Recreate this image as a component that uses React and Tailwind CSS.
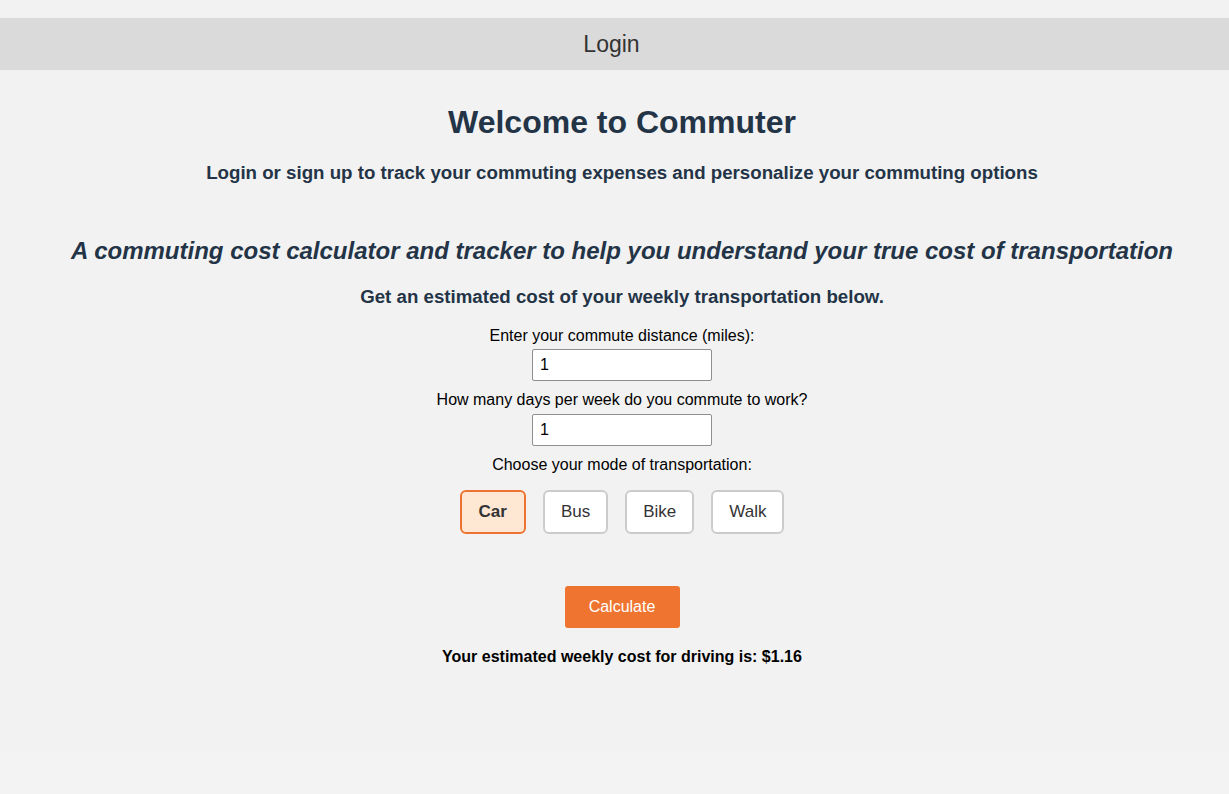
import { useState } from "react";

const modes = ["Car", "Bus", "Bike", "Walk"];

export default function App() {
  const [distance, setDistance] = useState("1");
  const [days, setDays] = useState("1");
  const [mode, setMode] = useState("Car");

  return (
    <div className="min-h-screen bg-[#f3f3f3] font-['Liberation_Sans',Arial,sans-serif]">
      <div className="h-[753px] bg-[#f2f2f2] pt-[18px]">
        <header className="flex h-[52px] items-center justify-center bg-[#dadada] pr-[6px] text-[23px] text-[#333]">
          Login
        </header>

        <main className="flex flex-col items-center pl-[15px] text-center">
          <h1 className="mt-[33px] text-[32px] font-bold leading-[38px] text-[#243447]">
            Welcome to Commuter
          </h1>
          <h3 className="mt-[21px] text-[18.7px] font-bold leading-[22px] text-[#243447]">
            Login or sign up to track your commuting expenses and personalize your commuting options
          </h3>

          <h2 className="mt-[53px] text-[24px] font-bold italic leading-[28px] text-[#243447]">
            A commuting cost calculator and tracker to help you understand your true cost of transportation
          </h2>
          <h3 className="mt-[21px] text-[18.7px] font-bold leading-[22px] text-[#243447]">
            Get an estimated cost of your weekly transportation below.
          </h3>

          <label className="mt-[19px] text-[16px] leading-[18px] text-black">
            Enter your commute distance (miles):
          </label>
          <input
            value={distance}
            onChange={(e) => setDistance(e.target.value)}
            className="mt-[4px] h-[32px] w-[180px] rounded-[2px] border border-[#8f8f8f] bg-white px-[7px] text-[16px] text-black outline-none"
          />
          <label className="mt-[10px] text-[16px] leading-[18px] text-black">
            How many days per week do you commute to work?
          </label>
          <input
            value={days}
            onChange={(e) => setDays(e.target.value)}
            className="mt-[5px] h-[32px] w-[180px] rounded-[2px] border border-[#8f8f8f] bg-white px-[7px] text-[16px] text-black outline-none"
          />
          <label className="mt-[10px] text-[16px] leading-[18px] text-black">
            Choose your mode of transportation:
          </label>

          <div className="mt-[16px] flex gap-[17px]">
            {modes.map((m) =>
              m === mode ? (
                <button
                  key={m}
                  onClick={() => setMode(m)}
                  className="h-[44px] rounded-[6px] border-2 border-[#ee7330] bg-[#fee8d3] px-[17px] text-[17px] font-bold text-[#333]"
                >
                  {m}
                </button>
              ) : (
                <button
                  key={m}
                  onClick={() => setMode(m)}
                  className="h-[44px] rounded-[6px] border-2 border-[#cccccc] bg-white px-[16px] text-[17px] text-[#333]"
                >
                  {m}
                </button>
              )
            )}
          </div>

          <button className="mt-[52px] h-[42px] w-[115px] rounded-[3px] bg-[#ee7430] text-[16px] text-white">
            Calculate
          </button>

          <p className="mt-[20px] text-[16px] font-bold leading-[18px] text-black">
            Your estimated weekly cost for driving is: $1.16
          </p>
        </main>
      </div>
    </div>
  );
}
